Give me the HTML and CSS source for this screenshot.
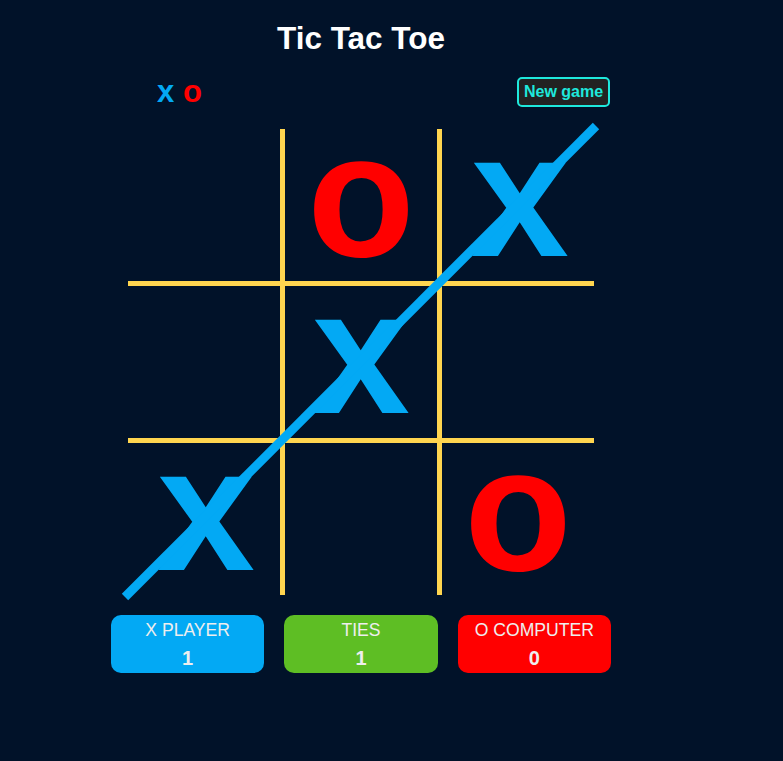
FILE: index.html
```html
<!DOCTYPE html>
<html lang="en">
<head>
<meta charset="utf-8">
<title>Tic Tac Toe</title>
<link rel="stylesheet" href="styles.css">
</head>
<body>
<div class="app">
  <h1 class="title">Tic Tac Toe</h1>
  <div class="topbar">
    <div class="turn"><span class="mark-x">x</span> <span class="mark-o">o</span></div>
    <button class="newgame">New game</button>
  </div>
  <div class="board-wrap">
    <div class="board">
      <div class="cell"></div>
      <div class="cell"><span class="mark-o">o</span></div>
      <div class="cell cell-shift"><span class="mark-x">x</span></div>
      <div class="cell"></div>
      <div class="cell"><span class="mark-x">x</span></div>
      <div class="cell"></div>
      <div class="cell cell-shift"><span class="mark-x">x</span></div>
      <div class="cell"></div>
      <div class="cell"><span class="mark-o">o</span></div>
    </div>
    <svg class="winline" width="466" height="466" viewBox="0 0 466 466">
      <line x1="-3" y1="468" x2="468" y2="-3" stroke="#03a9f4" stroke-width="9" stroke-linecap="butt"/>
    </svg>
  </div>
  <div class="scores">
    <div class="score score-x">
      <div class="score-label">X PLAYER</div>
      <div class="score-value">1</div>
    </div>
    <div class="score score-ties">
      <div class="score-label">TIES</div>
      <div class="score-value">1</div>
    </div>
    <div class="score score-o">
      <div class="score-label">O COMPUTER</div>
      <div class="score-value">0</div>
    </div>
  </div>
</div>
</body>
</html>
```

FILE: styles.css
```css
html, body {
  margin: 0;
  padding: 0;
  background: #011229;
  font-family: "Liberation Sans", Arial, sans-serif;
}

.app {
  width: 722px;
  display: flex;
  flex-direction: column;
  align-items: center;
}

.title {
  margin: 19px 0 0;
  font-size: 31.5px;
  line-height: 38px;
  font-weight: bold;
  color: #ffffff;
}

.topbar {
  width: 500px;
  height: 30px;
  margin-top: 20px;
  display: flex;
  justify-content: space-between;
  align-items: center;
}

.turn {
  padding-left: 46px;
  font-size: 31px;
  line-height: 30px;
  font-weight: bold;
}

.mark-x {
  color: #03a9f4;
}

.mark-o {
  color: #ff0000;
}

.newgame {
  width: 93px;
  height: 30px;
  box-sizing: border-box;
  margin: 0 1px 0 0;
  padding: 0 4px;
  border: 2px solid #1ee8dc;
  border-radius: 5px;
  background: #222222;
  color: #1ee8dc;
  font-family: "Liberation Sans", Arial, sans-serif;
  font-size: 16px;
  font-weight: bold;
  line-height: 26px;
}

.board-wrap {
  position: relative;
  margin-top: 22px;
}

.board {
  display: grid;
  grid-template-columns: repeat(3, 152px);
  grid-template-rows: repeat(3, 152px);
  gap: 5px;
  background: #ffd54f;
}

.cell {
  background: #011229;
  box-sizing: border-box;
  padding-bottom: 21px;
  display: flex;
  align-items: center;
  justify-content: center;
  font-size: 176px;
  line-height: 100px;
  font-weight: bold;
}

.cell-shift {
  padding-left: 4px;
}

.winline {
  position: absolute;
  left: 0;
  top: 0;
  overflow: visible;
}

.scores {
  width: 500px;
  margin-top: 20px;
  display: flex;
  gap: 20px;
}

.score {
  flex: 1;
  box-sizing: border-box;
  height: 58px;
  padding: 5px 0 3px;
  border-radius: 10px;
  display: flex;
  flex-direction: column;
  align-items: center;
  gap: 7px;
  color: #eeeeee;
}

.score-x {
  background: #03a9f4;
}

.score-ties {
  background: #5ebe24;
}

.score-o {
  background: #ff0000;
}

.score-label {
  font-size: 17.6px;
  line-height: 20px;
}

.score-value {
  font-size: 20px;
  line-height: 23px;
  font-weight: bold;
}
```
